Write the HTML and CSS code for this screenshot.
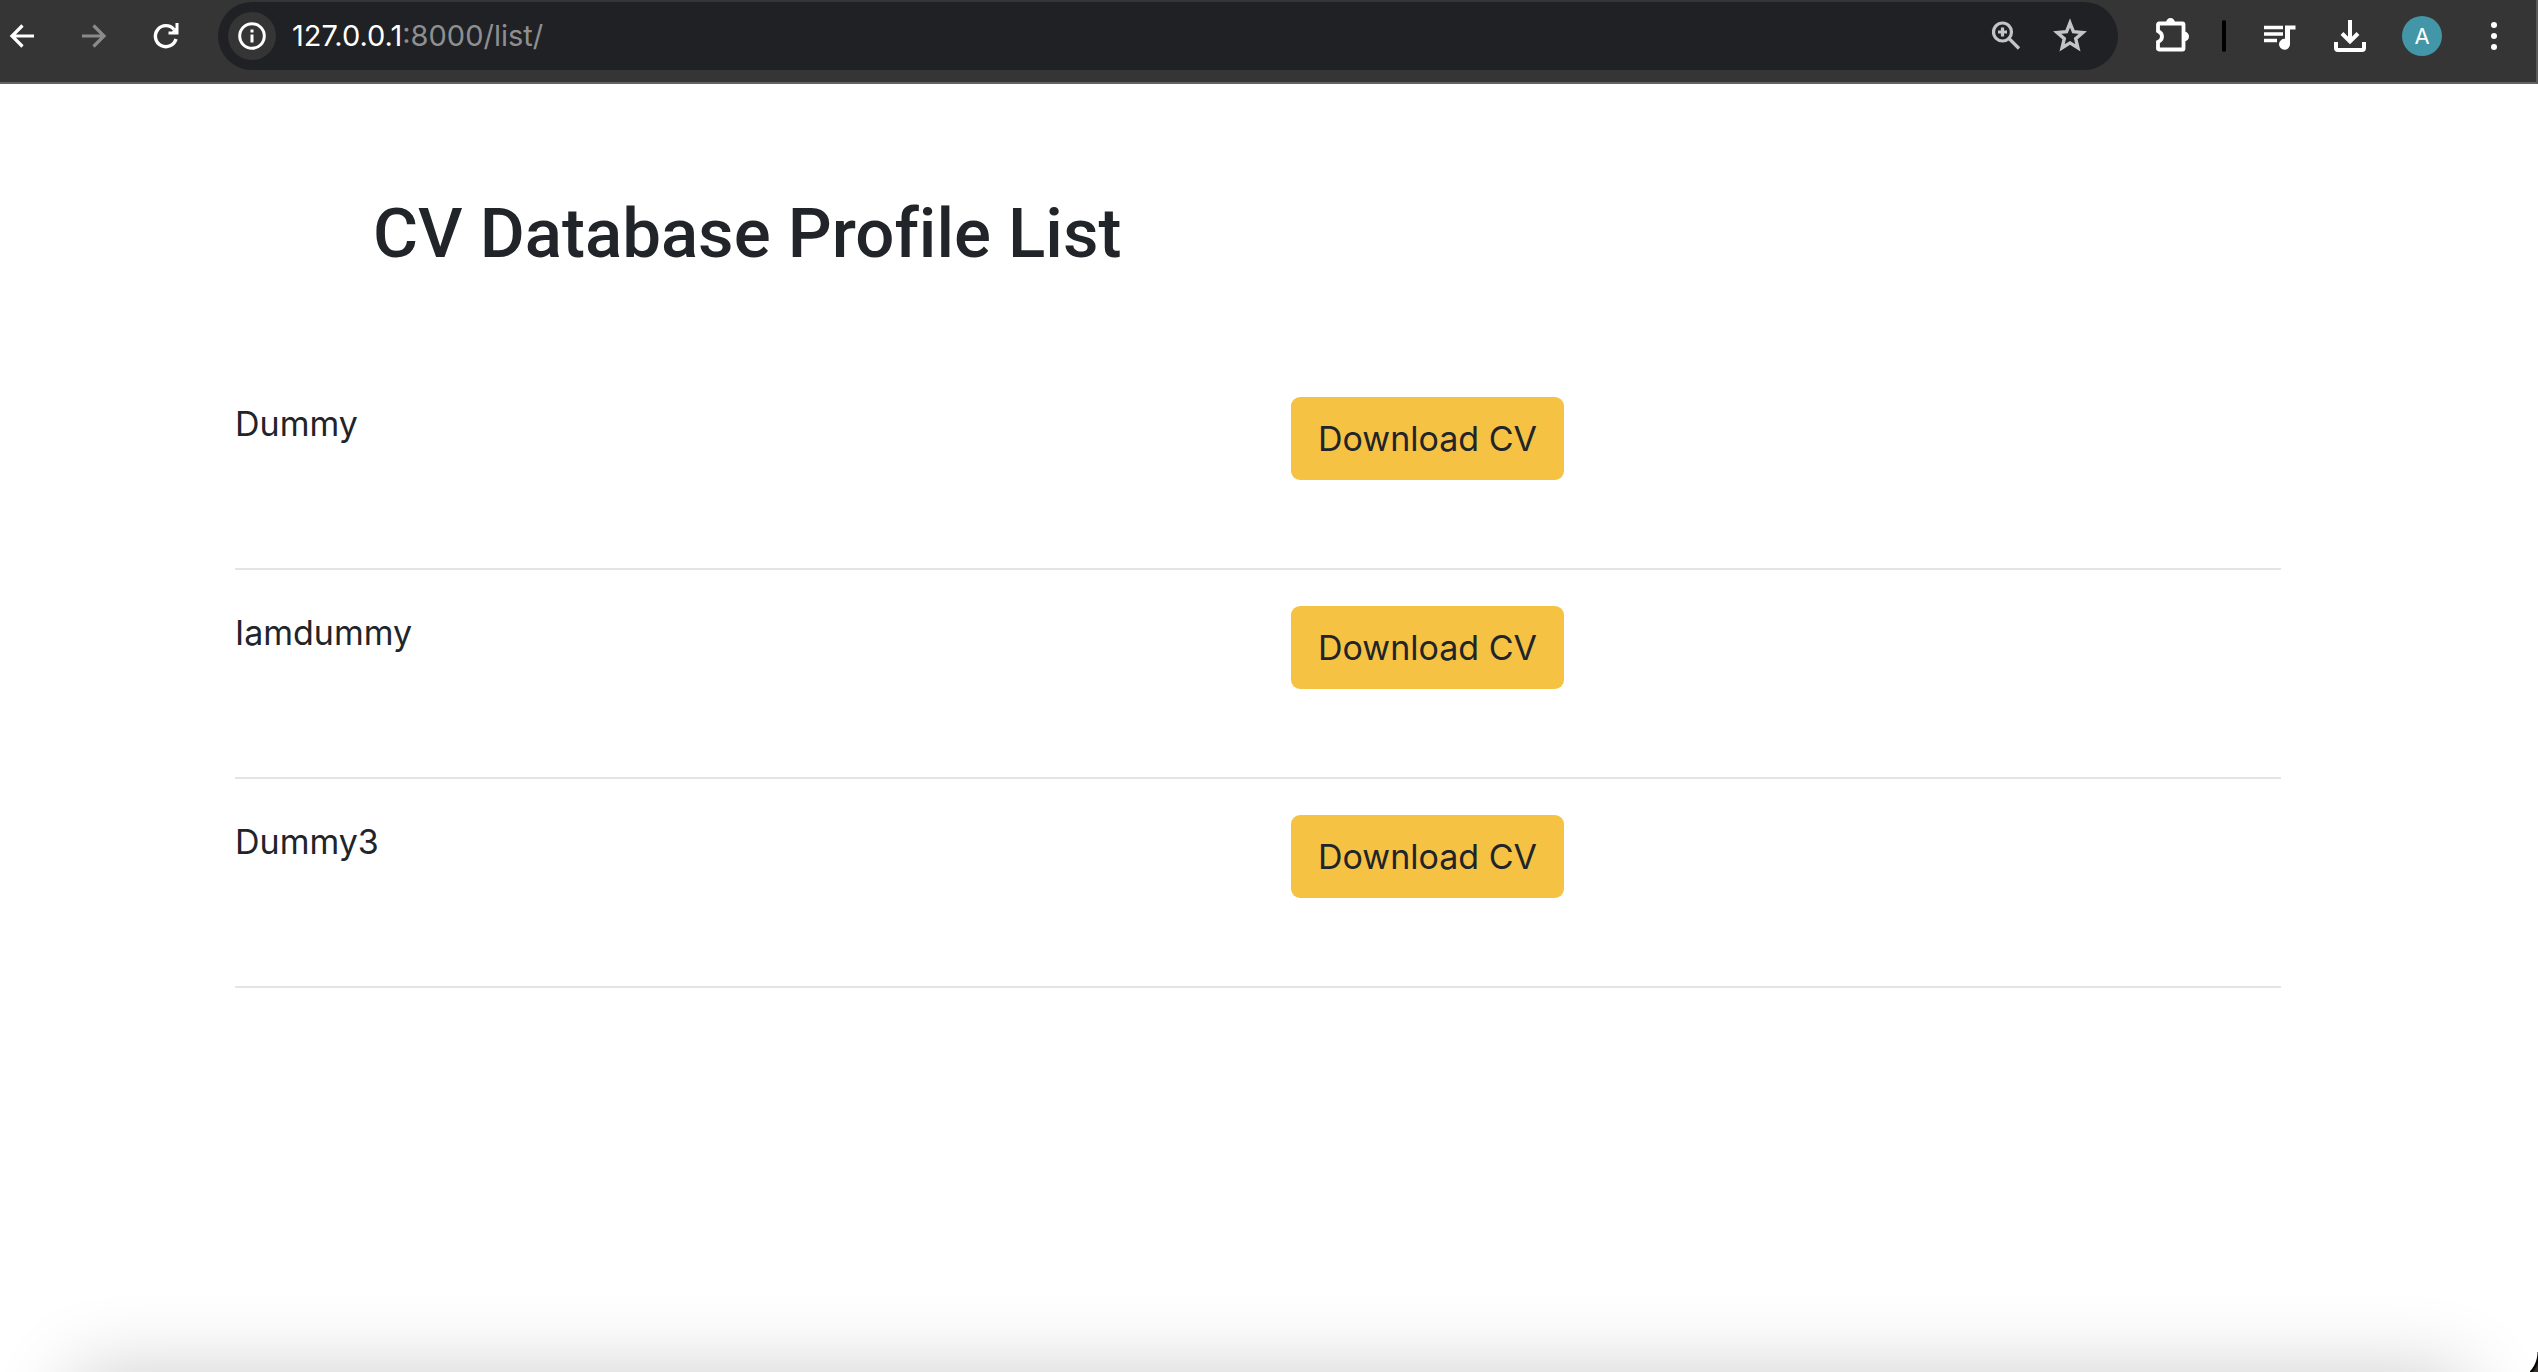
FILE: index.html
```html
<!DOCTYPE html>
<html lang="en">
<head>
<meta charset="utf-8">
<title>CV Database Profile List</title>
<link rel="stylesheet" href="styles.css">
</head>
<body>
<header class="toolbar">
  <nav class="nav" aria-label="History">
    <button class="icon-btn" aria-label="Back"><svg viewBox="0 0 24 24"><path d="M24 12H2M12.500 1.500 2 12l10.500 10.500" fill="none" stroke="#fff" stroke-width="3.200"/></svg></button>
    <button class="icon-btn" aria-label="Forward"><svg viewBox="0 0 24 24"><path d="M0 12H22M11.500 1.500 22 12 11.500 22.500" fill="none" stroke="#8a8a8a" stroke-width="3.200"/></svg></button>
    <button class="icon-btn" aria-label="Reload"><svg viewBox="0 0 24 24"><path d="M22 15A10.500 10.500 0 1 1 20 5.500" fill="none" stroke="#fff" stroke-width="3.400"/><path d="M24.500-1V10.500H14.500V7.500H18L21.500 4V-1z" fill="#fff"/></svg></button>
  </nav>
  <div class="address">
    <button class="site-info" aria-label="Site information"><svg viewBox="0 0 28 28"><circle cx="14" cy="14" r="12.300" fill="none" stroke="#fff" stroke-width="3"/><path d="M14 12.500V20.500M14 7.500V10.500" stroke="#fff" stroke-width="3"/></svg></button>
    <span class="url">127.0.0.1<span class="url-rest">:8000/list/</span></span>
    <button class="icon-btn" aria-label="Zoom"><svg viewBox="0 0 32 32"><circle cx="12.500" cy="12" r="9" fill="none" stroke="#c4c4c6" stroke-width="3.200"/><path d="M12.500 7.500v9M8 12h9M19 18.500 29 28.500" stroke="#c4c4c6" stroke-width="3.200"/></svg></button>
    <button class="icon-btn" aria-label="Bookmark"><svg viewBox="0 0 32 32"><path d="M16 3 19.400 11.700 28.800 12.500 21.700 18.600 23.900 27.800 16 22.900 8.100 27.800 10.300 18.600 3.200 12.500 12.600 11.700z" fill="none" stroke="#c4c4c6" stroke-width="3.400"/></svg></button>
  </div>
  <div class="tools">
    <button class="icon-btn extensions" aria-label="Extensions"><svg viewBox="0 0 34 34"><path d="M3 4.500H26.500Q27.500 4.500 27.500 5.500V29.500Q27.500 30.500 26.500 30.500H3Q2 30.500 2 29.500V23Q6 21 6 17.500T2 12V5.500Q2 4.500 3 4.500Z" fill="none" stroke="#fff" stroke-width="3.800"/><path d="M10 4a4.500 5 0 0 1 9 0zM28 12.500a5 5 0 0 1 0 10z" fill="#fff"/></svg></button>
    <span class="divider"></span>
    <button class="icon-btn" aria-label="Media"><svg viewBox="0 0 32 32"><path d="M-2 7.500H17M-2 14H17M-2 20.500H11" stroke="#fff" stroke-width="3.400"/><path d="M19 5.500H29.500V9.500H24V24a5.500 5.500 0 1 1-5-5.200z" fill="#fff"/></svg></button>
    <button class="icon-btn" aria-label="Downloads"><svg viewBox="0 0 32 32"><path d="M16 0V21M8 13.500 16 21.500 24 13.500M2 22V28Q2 30 4 30H28Q30 30 30 28V22" fill="none" stroke="#fff" stroke-width="4"/></svg></button>
    <button class="avatar" aria-label="Profile">A</button>
    <button class="icon-btn" aria-label="Menu"><svg viewBox="0 0 32 32"><circle cx="16" cy="5" r="3" fill="#fff"/><circle cx="16" cy="16" r="3" fill="#fff"/><circle cx="16" cy="27" r="3" fill="#fff"/></svg></button>
  </div>
</header>
<main class="page">
  <h1 class="title">CV Database Profile List</h1>
  <ul class="profiles">
    <li class="profile"><span class="name">Dummy</span><a class="download" href="#">Download CV</a></li>
    <li class="profile"><span class="name">Iamdummy</span><a class="download" href="#">Download CV</a></li>
    <li class="profile"><span class="name">Dummy3</span><a class="download" href="#">Download CV</a></li>
  </ul>
</main>
<div class="window-edge"></div>
</body>
</html>
```

FILE: styles.css
```css
* { box-sizing: border-box; }
body {
  margin: 0;
  min-height: 100vh;
  position: relative;
  background: #fff;
  color: #212529;
  font-family: Inter, "Liberation Sans", sans-serif;
}
button {
  border: 0;
  padding: 0;
  background: none;
  color: inherit;
  font: inherit;
}
svg { display: block; width: 100%; height: 100%; overflow: visible; }

.toolbar {
  display: flex;
  align-items: center;
  height: 84px;
  padding: 0 26px 10px 10px;
  background: #353535;
  border-right: 2px solid #5a5a5a;
  border-bottom: 2px solid #636363;
}
.nav { display: flex; gap: 48px; margin-right: 40px; }
.nav .icon-btn { width: 24px; height: 24px; }
.icon-btn { flex: none; width: 32px; height: 32px; }
.address {
  display: flex;
  align-items: center;
  flex: 1;
  gap: 32px;
  height: 68px;
  padding: 0 32px 0 10px;
  border-radius: 34px;
  background: #202124;
}
.site-info {
  width: 48px;
  height: 48px;
  padding: 10px;
  margin-right: -16px;
  border-radius: 50%;
  background: #353535;
}
.url { flex: 1; color: #fff; font-size: 29px; line-height: 40px; }
.url-rest { color: #8e8f91; }
.tools { display: flex; align-items: center; gap: 36px; margin-left: 38px; }
.tools .extensions { width: 34px; height: 34px; }
.divider {
  width: 4px;
  height: 32px;
  margin: 0 4px 0 -4px;
  border-radius: 2px;
  background: #000;
}
.avatar {
  width: 40px;
  height: 40px;
  border-radius: 50%;
  background: #4296a8;
  color: #fff;
  font-size: 22px;
}

.page { padding: 108px 257px 0 235px; }
.title {
  margin: 0 0 121px;
  padding-left: 138px;
  font-family: Roboto, Inter, sans-serif;
  font-size: 69px;
  font-variant-ligatures: none;
  line-height: 84px;
  font-weight: 500;
}
.profiles { margin: 0; padding: 0; list-style: none; }
.profile {
  display: grid;
  grid-template-columns: 1fr 1fr;
  column-gap: 66px;
  align-items: start;
  height: 173px;
  margin-bottom: 36px;
  border-bottom: 2px solid #e4e4e4;
  font-size: 34px;
  line-height: 53px;
}
.download {
  justify-self: start;
  padding: 15px 27px;
  border-radius: 9px;
  background: #f6c244;
  color: #212529;
  text-decoration: none;
}

/* Shadow and rounded corner at the bottom of the window */
.window-edge {
  position: absolute;
  left: 0;
  right: 0;
  bottom: 0;
  height: 90px;
  overflow: hidden;
  pointer-events: none;
}
.window-edge::before {
  content: "";
  position: absolute;
  top: 100%;
  left: 70px;
  right: 70px;
  height: 100px;
  border-radius: 20px;
  box-shadow: 0 0 80px rgba(0, 0, 0, .2);
}
.window-edge::after {
  content: "";
  position: absolute;
  right: 0;
  bottom: 0;
  width: 8px;
  height: 20px;
  background: radial-gradient(circle at -21px 0, transparent 28px, #000 29px, #000 30px, #37302c 32px);
}
```
